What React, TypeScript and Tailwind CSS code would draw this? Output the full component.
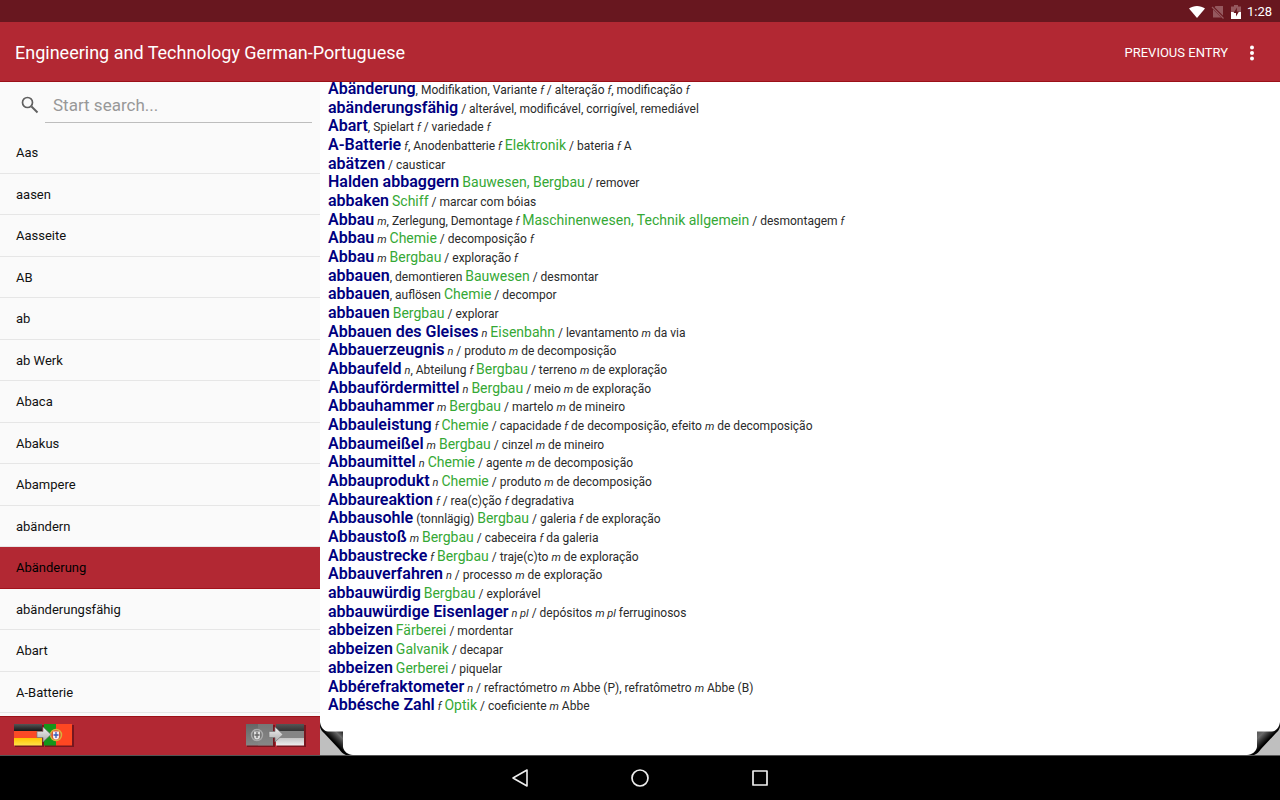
import React from "react";

const words = [
  "Aas", "aasen", "Aasseite", "AB", "ab", "ab Werk", "Abaca", "Abakus", "Abampere",
  "abändern", "Abänderung", "abänderungsfähig", "Abart", "A-Batterie",
];

// Entry markup: *headword*, _grammar_, {subject}
const entries = [
  "*Abänderung*, Modifikation, Variante _f_ / alteração _f_, modificação _f_",
  "*abänderungsfähig* / alterável, modificável, corrigível, remediável",
  "*Abart*, Spielart _f_ / variedade _f_",
  "*A-Batterie* _f_, Anodenbatterie _f_ {Elektronik} / bateria _f_ A",
  "*abätzen* / causticar",
  "*Halden abbaggern* {Bauwesen, Bergbau} / remover",
  "*abbaken* {Schiff} / marcar com bóias",
  "*Abbau* _m_, Zerlegung, Demontage _f_ {Maschinenwesen, Technik allgemein} / desmontagem _f_",
  "*Abbau* _m_ {Chemie} / decomposição _f_",
  "*Abbau* _m_ {Bergbau} / exploração _f_",
  "*abbauen*, demontieren {Bauwesen} / desmontar",
  "*abbauen*, auflösen {Chemie} / decompor",
  "*abbauen* {Bergbau} / explorar",
  "*Abbauen des Gleises* _n_ {Eisenbahn} / levantamento _m_ da via",
  "*Abbauerzeugnis* _n_ / produto _m_ de decomposição",
  "*Abbaufeld* _n_, Abteilung _f_ {Bergbau} / terreno _m_ de exploração",
  "*Abbaufördermittel* _n_ {Bergbau} / meio _m_ de exploração",
  "*Abbauhammer* _m_ {Bergbau} / martelo _m_ de mineiro",
  "*Abbauleistung* _f_ {Chemie} / capacidade _f_ de decomposição, efeito _m_ de decomposição",
  "*Abbaumeißel* _m_ {Bergbau} / cinzel _m_ de mineiro",
  "*Abbaumittel* _n_ {Chemie} / agente _m_ de decomposição",
  "*Abbauprodukt* _n_ {Chemie} / produto _m_ de decomposição",
  "*Abbaureaktion* _f_ / rea(c)ção _f_ degradativa",
  "*Abbausohle* (tonnlägig) {Bergbau} / galeria _f_ de exploração",
  "*Abbaustoß* _m_ {Bergbau} / cabeceira _f_ da galeria",
  "*Abbaustrecke* _f_ {Bergbau} / traje(c)to _m_ de exploração",
  "*Abbauverfahren* _n_ / processo _m_ de exploração",
  "*abbauwürdig* {Bergbau} / explorável",
  "*abbauwürdige Eisenlager* _n pl_ / depósitos _m pl_ ferruginosos",
  "*abbeizen* {Färberei} / mordentar",
  "*abbeizen* {Galvanik} / decapar",
  "*abbeizen* {Gerberei} / piquelar",
  "*Abbérefraktometer* _n_ / refractómetro _m_ Abbe (P), refratômetro _m_ Abbe (B)",
  "*Abbésche Zahl* _f_ {Optik} / coeficiente _m_ Abbe",
];

function Entry({ text }: { text: string }) {
  const parts = text.split(/(\*[^*]+\*|_[^_]+_|\{[^}]+\})/).filter(Boolean);
  return (
    <p className="min-h-0 flex-1 whitespace-pre text-[12px] leading-4 font-normal text-[#2a2a2a]">
      {parts.map((part, i) => {
        const body = part.slice(1, -1);
        if (part[0] === "*") return <b key={i} className="text-[16px] font-semibold text-[#000080]">{body}</b>;
        if (part[0] === "_") return <i key={i} className="text-[11px]">{body}</i>;
        if (part[0] === "{") return <span key={i} className="text-[14px] text-[#35a835]">{body}</span>;
        return <span key={i}>{part}</span>;
      })}
    </p>
  );
}

function Arrow() {
  return <path d="M24 12h6V7.500l8 7.500-8 7.500V18h-6z" fill="url(#arrow)" stroke="#777" strokeWidth=".7" />;
}

function GermanToPortuguese() {
  return (
    <svg width="62" height="28" viewBox="0 0 62 28" aria-hidden="true">
      <defs>
        <linearGradient id="arrow" x1="0" y1="0" x2="0" y2="1"><stop stopColor="#f4f4f4" /><stop offset="1" stopColor="#aaa" /></linearGradient>
        <linearGradient id="gd" x1="0" y1="0" x2="0" y2="1"><stop stopColor="#555" /><stop offset="1" stopColor="#111" /></linearGradient>
        <linearGradient id="gy" x1="0" y1="0" x2="0" y2="1"><stop stopColor="#ffc400" /><stop offset="1" stopColor="#ffe24a" /></linearGradient>
      </defs>
      <rect x="2" y="4" width="29" height="22" fill="#5e0f17" opacity=".7" />
      <rect x="32" y="4" width="29" height="22" fill="#5e0f17" opacity=".7" />
      <rect x="1" y="3" width="28" height="7.500" fill="url(#gd)" />
      <rect x="1" y="10" width="28" height="7.500" fill="#fb4a26" />
      <rect x="1" y="17" width="28" height="7.500" fill="url(#gy)" />
      <rect x="31" y="3" width="12" height="21.500" fill="#15961a" />
      <rect x="43" y="3" width="16" height="21.500" fill="#ff4722" />
      <circle cx="43" cy="14" r="5.500" fill="#d9543a" stroke="#d8b23c" strokeWidth="1.400" />
      <path d="M40 10.500h6v5a3 3 0 0 1-6 0z" fill="#f6eef2" />
      <path d="M43 11v6M40.500 14h5" stroke="#3558b8" strokeWidth="1.300" />
      <g transform="translate(0 -1.500)"><Arrow /></g>
    </svg>
  );
}

function PortugueseToGerman() {
  return (
    <svg width="62" height="28" viewBox="0 0 62 28" aria-hidden="true">
      <defs>
        <linearGradient id="pg" x1="0" y1="0" x2="0" y2="1"><stop stopColor="#666" /><stop offset="1" stopColor="#858585" /></linearGradient>
        <linearGradient id="pk" x1="0" y1="0" x2="0" y2="1"><stop stopColor="#555" /><stop offset="1" stopColor="#303030" /></linearGradient>
        <linearGradient id="pw" x1="0" y1="0" x2="0" y2="1"><stop stopColor="#c4c4c4" /><stop offset="1" stopColor="#eee" /></linearGradient>
      </defs>
      <rect x="2" y="4" width="28" height="22" fill="#5e0f17" opacity=".7" />
      <rect x="32" y="4" width="29" height="22" fill="#5e0f17" opacity=".7" />
      <rect x="1" y="3" width="27" height="21.500" fill="url(#pg)" />
      <rect x="13" y="3" width="15" height="21.500" fill="#888" opacity=".5" />
      <rect x="31" y="3" width="28" height="7.500" fill="url(#pk)" />
      <rect x="31" y="10" width="28" height="7.500" fill="#858585" />
      <rect x="31" y="17" width="28" height="7.500" fill="url(#pw)" />
      <circle cx="12" cy="14" r="5.500" fill="#777" stroke="#aaa" strokeWidth="1.400" />
      <path d="M9 10.500h6v5a3 3 0 0 1-6 0z" fill="#ddd" />
      <path d="M12 11v6M9.500 14h5" stroke="#666" strokeWidth="1.300" />
      <g transform="translate(0 -1.500)"><Arrow /></g>
    </svg>
  );
}

function Curl({ className, id, corner }: { className: string; id: string; corner: string }) {
  return (
    <svg width="34" height="34" viewBox="0 0 34 34" className={className} aria-hidden="true">
      <defs>
        <linearGradient id={id} gradientUnits="userSpaceOnUse" x1="13" y1="20" x2="23" y2="10">
          <stop stopColor="#000" /><stop offset=".3" stopColor="#333" /><stop offset=".6" stopColor="#6a6a6a" /><stop offset="1" stopColor={corner} />
        </linearGradient>
      </defs>
      <path d="M0 1C1 7 4 10 8 10.500H23V26C24 31 28 33.500 33 34H0z" fill={`url(#${id})`} />
      <path d="M0 6C1 9 2 10 4 12L19 28C21 31 23 33 26 34H0z" fill="#bfbfbf" />
    </svg>
  );
}

export default function App() {
  return (
    <div className="flex h-screen min-h-0 flex-col overflow-hidden bg-black font-[Roboto,sans-serif]">
      <div className="flex h-[22px] shrink-0 items-center justify-end bg-[#68171f] pt-px pr-2 text-white">
        <svg width="16" height="14" viewBox="0 0 16 14" className="mr-[6px]" aria-hidden="true">
          <path d="M0 3.500C4.500 0 11.500 0 16 3.500L8 13z" fill="#fff" />
        </svg>
        <svg width="14" height="14" viewBox="0 0 14 14" className="mr-[6px]" aria-hidden="true">
          <path d="M4.500 1H12v11.500H2V4z" fill="#95585e" />
          <path d="M1 1.500L13 13.500" stroke="#68171f" strokeWidth="2.500" />
          <path d="M1 2L12.500 13.500" stroke="#95585e" strokeWidth="1.200" />
        </svg>
        <svg width="10" height="14" viewBox="0 0 10 14" className="mr-[6px]" aria-hidden="true">
          <path d="M3 0h4v1.500h3V7H0V1.500h3z" fill="#95585e" />
          <path d="M0 7h10v7H0z" fill="#fff" />
          <path d="M6 2.500L2.500 8H5v3.500L8 6.500H5.800z" fill="#68171f" />
        </svg>
        <span className="text-[13px] leading-5">1:28</span>
      </div>

      <header className="flex h-[60px] shrink-0 items-center border-b border-[#9b1018] bg-[#b22833] pt-[2px] pl-[15px] text-white">
        <h1 className="flex-1 text-[18px] leading-6">Engineering and Technology German-Portuguese</h1>
        <button className="text-[13px] leading-5">PREVIOUS ENTRY</button>
        <button aria-label="More options" className="mr-4 ml-3 flex w-6 justify-center">
          <svg width="6" height="16" viewBox="0 0 6 16" fill="#fff" aria-hidden="true">
            <circle cx="3" cy="2.500" r="2" /><circle cx="3" cy="8" r="2" /><circle cx="3" cy="13.500" r="2" />
          </svg>
        </button>
      </header>

      <div className="flex min-h-0 flex-1">
        <aside className="flex w-1/4 flex-col bg-[#fafafa]">
          <label className="flex h-[50px] shrink-0 items-start pr-2">
            <span className="flex h-[46px] w-[45px] items-center pl-[21px]">
              <svg width="18" height="18" viewBox="0 0 18 18" fill="none" stroke="#606060" aria-hidden="true">
                <circle cx="6.500" cy="6.500" r="5" strokeWidth="1.700" />
                <path d="M10.500 10.500L16.500 16.500" strokeWidth="2" />
              </svg>
            </span>
            <input
              type="text"
              aria-label="Search"
              placeholder="Start search..."
              className="h-[41px] min-w-0 flex-1 border-b border-[#bdbdbd] bg-transparent px-2 pt-[6px] text-[17px] text-black outline-none placeholder:text-[#989898]"
            />
          </label>
          <ul className="flex min-h-0 flex-1 flex-col pb-[3px]">
            {words.map((w) => (
              <li key={w} className="flex min-h-0 flex-1">
                <button
                  className={
                    w === "Abänderung"
                      ? "flex-1 border-b border-[#a3121c] bg-[#b22833] px-4 pt-[2px] text-left text-[13px] leading-5 text-black"
                      : "flex-1 border-b border-[#e6e6e6] px-4 pt-[2px] text-left text-[13px] leading-5 text-[#111]"
                  }
                >
                  {w}
                </button>
              </li>
            ))}
          </ul>
          <div className="flex h-[39px] shrink-0 items-center justify-between border-t border-[#9b1018] bg-[#b22833] px-[13px] pb-[2px]">
            <button aria-label="German to Portuguese"><GermanToPortuguese /></button>
            <button aria-label="Portuguese to German"><PortugueseToGerman /></button>
          </div>
        </aside>

        <main className="relative flex min-w-0 flex-1 flex-col bg-white px-2 pb-[39px]">
          <div className="-mt-px flex min-h-0 flex-1 flex-col">
            {entries.map((e) => <Entry key={e} text={e} />)}
          </div>
          <Curl id="curl-left" corner="#1c1c1c" className="absolute bottom-0 left-0" />
          <Curl id="curl-right" corner="#555" className="absolute right-0 bottom-0 -scale-x-100" />
        </main>
      </div>

      <nav className="flex h-[45px] shrink-0 items-center justify-center gap-[96px] border-t border-[#555] bg-black">
        <button aria-label="Back" className="flex w-6 justify-center">
          <svg width="20" height="20" viewBox="0 0 20 20" fill="none" stroke="#eee" strokeWidth="1.600" strokeLinejoin="round" aria-hidden="true"><path d="M17 2v16L3 10z" /></svg>
        </button>
        <button aria-label="Home" className="flex w-6 justify-center">
          <svg width="20" height="20" viewBox="0 0 20 20" fill="none" stroke="#eee" strokeWidth="1.700" aria-hidden="true"><circle cx="10" cy="10" r="8" /></svg>
        </button>
        <button aria-label="Recent apps" className="flex w-6 justify-center">
          <svg width="20" height="20" viewBox="0 0 20 20" fill="none" stroke="#eee" strokeWidth="1.700" strokeLinejoin="round" aria-hidden="true"><path d="M3 3h14v14H3z" /></svg>
        </button>
      </nav>
    </div>
  );
}
